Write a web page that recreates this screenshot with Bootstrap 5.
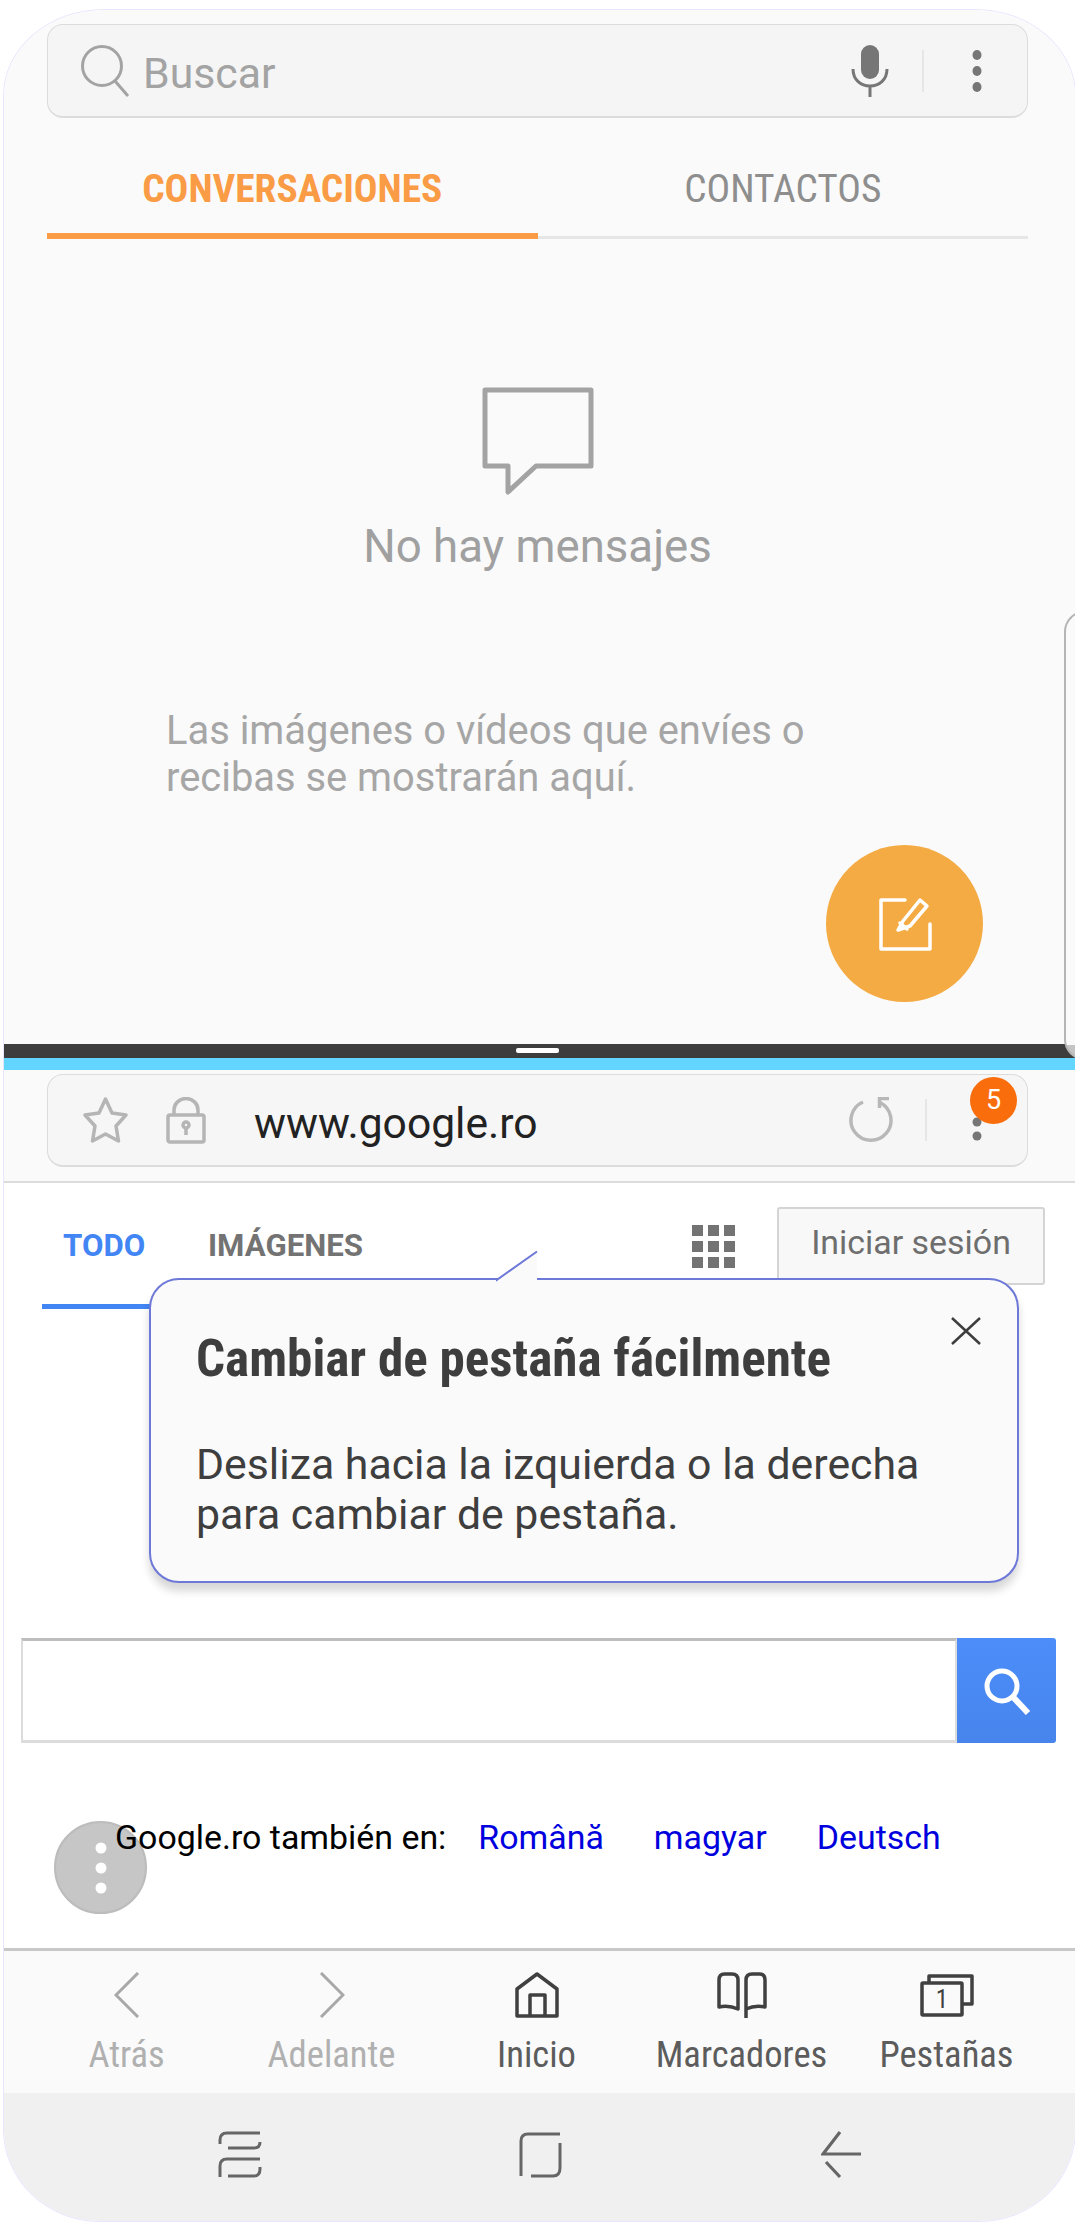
<!doctype html>
<html lang="es"><head><meta charset="utf-8"><title>Pantalla dividida</title>
<link href="https://cdn.jsdelivr.net/npm/bootstrap@5.3.0/dist/css/bootstrap.min.css" rel="stylesheet">
<style>
html,body{margin:0;background:#fff}
body{width:1075px;height:2227px;overflow:hidden;font-family:Roboto,"Liberation Sans",sans-serif}
.phone{position:relative;margin:10px 0 0 4px;width:1071px;height:2211px;overflow:hidden;border-radius:100px 100px 96px 96px/86px 86px 92px 92px;background:#fff;box-shadow:0 0 0 1px #e6e6ff}
.cond{font-family:"Roboto Condensed","Liberation Sans Narrow",Roboto,sans-serif;font-stretch:75%}
.pane-top{height:1034px;background:#fafafa;padding:14px 47px 0 43px;position:relative}
.addr{border:1px solid #dcdcdc;border-bottom-width:2px;border-radius:16px;background:#f5f5f5}
.addr-search{height:94px;padding:0 43px 0 33px}
.buscar{font-size:42.8px;line-height:50px;color:#a3a3a3;margin:4px 0 0 12px}
.vsep{width:2px;height:42px;background:#e6e6e6}
.tabs-msg{margin-top:49px}
.tab-m{width:50%;height:69px;font-size:39.4px;text-align:center;line-height:38px;border-bottom:3px solid #e6e6e6;color:#8e8e8e}
.tab-m.on{color:#fa9b45;font-weight:700;border-bottom:6px solid #fa9b45;height:72px;line-height:44px}
.empty{margin-top:148px;text-align:center;color:#a0a0a0}
.empty-t{font-size:45.6px;line-height:52px;margin-top:26px}
.empty-p{font-size:39.9px;line-height:47px;color:#a6a6a6;margin:134px 0 0 119px;text-align:left;width:680px}
.fab-w{position:absolute;left:822px;top:835px;width:157px;height:157px;border-radius:50%;background:#f4ab43}
.edge{position:absolute;z-index:2;right:-30px;top:601px;width:41px;height:449px;border:2px solid #b5b5b5;border-right:0;border-radius:22px;background:linear-gradient(#fafafa 432px,#c4c4c4 432px)}
.split{height:14px;background:#3d3d3d;position:relative}
.grip{position:absolute;left:512px;top:4px;width:43px;height:5px;border-radius:2px;background:#fff}
.stat{height:12px;background:#62d6fe}
.browser{height:113px;padding:4px 47px 0 43px;background:#fafafa;border-bottom:2px solid #dcdcdc}
.addr-url{height:93px;padding:0 43px 0 35px;background:#f6f6f6;position:relative}
.url{font-size:42.6px;line-height:50px;color:#222;margin:5px 0 0 48px}
.badge-n{position:absolute;left:922px;top:2px;width:47px;height:47px;border-radius:50%;background:#f96d0c;color:#fff;font-size:27px}
.web{height:765px;background:#fff;position:relative}
.gtabs{height:126px;padding:0 30px 0 38px}
.gtab{font-size:31.2px;font-weight:700;height:93px;margin-top:33px;line-height:60px;color:#737373;border-bottom:5px solid transparent;margin-left:37px;padding:0 21px}
.gtab.on{color:#4285f4;border-bottom-color:#4285f4;width:108px;padding:0 0 0 21px;margin-left:0}
.grid-ic{margin-top:42px}
.signin{width:268px;height:78px;margin:24px 0 0 41px;border:2px solid #d4d4d4;background:#f8f8f8;border-radius:3px;font-size:33.9px;line-height:40px;color:#6e6e6e;padding:0 0 6px 0}
.gsearch{margin:329px 19px 0 17px;height:105px;display:flex}
.ginput{flex:1;border:2px solid #dcdcdc;border-top-color:#bdbdbd;border-bottom-width:3px;border-top-width:3px;background:#fff}
.gbtn{width:99px;background:linear-gradient(#4c8dfa,#4785ec);border-radius:0 3px 3px 0}
.langs{position:relative;z-index:1;margin:76px 0 0 111px;font-size:33.9px;line-height:38px;color:#000}
.langs a{color:#0000de;text-decoration:none;margin-left:50px}
.langs a.first-l{margin-left:32px}
.gfab{position:absolute;left:50px;top:638px;width:93px;height:93px;border-radius:50%;background:#c6c6c6;border:2px solid #bcbcbc}
.pop{position:absolute;z-index:2;left:145px;top:95px;width:870px;height:305px;background:#fafafa;border:2px solid #6d78d8;border-radius:30px;box-shadow:0 8px 8px rgba(0,0,0,.16);padding:51px 40px 0 45px;color:#3e3e3e}
.tail{position:absolute;left:345px;top:-30px;width:45px;height:33px;display:block}
.pop-t{font-size:51.1px;font-weight:700;line-height:56px;margin:0}
.pop-b{font-size:42.8px;line-height:50px;margin:52px 0 0}
.pop-x{position:absolute;left:800px;top:37px;display:block}
.btoolbar{height:145px;border-top:3px solid #c8c8c8;background:#fafafa;padding:0 20px}
.bt{width:205px;text-align:center;color:#5c5c5c;font-size:36.6px;line-height:46px;padding-top:19px}
.bt.off{color:#b0b0b0}
.bt-ic{height:46px;margin-bottom:16px}
.navb{height:128px;background:#f0f0f0}
.nav-ic{margin-top:38px}
</style></head>
<body>
<div class="phone">
 <div class="pane-top">
  <div class="addr addr-search d-flex align-items-center">
   <svg width="50" height="52" viewBox="0 0 50 52" fill="none" stroke="#a3a3a3" stroke-width="3"><circle cx="21" cy="21" r="19.5"/><path d="M34 36 47 51"/></svg>
   <span class="buscar">Buscar</span>
   <svg class="ms-auto" width="38" height="52" viewBox="0 0 38 52" fill="none" stroke="#767676" stroke-width="3"><rect x="10" y="0" width="18" height="34" rx="9" fill="#767676" stroke="none"/><path d="M2 24c0 11 8 17 17 17s17-6 17-17M19 41v11"/></svg>
   <span class="vsep" style="margin:0 46px 0 33px"></span>
   <svg width="14" height="44" viewBox="0 0 14 44" fill="#767676"><ellipse cx="7" cy="6" rx="4.5" ry="5"/><ellipse cx="7" cy="22" rx="4.5" ry="5"/><ellipse cx="7" cy="38" rx="4.5" ry="5"/></svg>
  </div>
  <div class="tabs-msg d-flex align-items-end">
   <div class="tab-m on cond">CONVERSACIONES</div>
   <div class="tab-m cond">CONTACTOS</div>
  </div>
  <div class="empty">
   <svg width="112" height="108" viewBox="0 0 112 108" fill="none" stroke="#a3a3a3" stroke-width="5" stroke-linejoin="round"><path d="M3 3H109V79H54L26 105V79H3Z"/></svg>
   <div class="empty-t">No hay mensajes</div>
   <div class="empty-p">Las imágenes o vídeos que envíes o recibas se mostrarán aquí.</div>
  </div>
  <div class="fab-w d-flex align-items-center justify-content-center">
   <svg width="54" height="54" viewBox="0 0 54 54" fill="none" stroke="#fff" stroke-width="3.5" stroke-linejoin="round" stroke-linecap="round"><path d="M27 3H3V52H52V27"/><path d="M25 24 42 3 49 9 32 29 20 33Z"/><path d="M22 26 29 32"/></svg>
  </div>
  <div class="edge"></div>
 </div>
 <div class="split"><span class="grip"></span></div>
 <div class="stat"></div>
 <div class="browser">
  <div class="addr addr-url d-flex align-items-center">
   <svg width="45" height="46" viewBox="0 0 45 46" fill="none" stroke="#b5b5b5" stroke-width="3.5" stroke-linejoin="round"><path d="M22.5 2 29 16 43 18 33 29 35.5 44 22.5 37 9.5 44 12 29 2 18 16 16Z"/></svg>
   <svg style="margin-left:38px" width="40" height="47" viewBox="0 0 40 47" fill="none" stroke="#b5b5b5" stroke-width="3.5" stroke-linejoin="round"><rect x="2" y="18" width="36" height="27" rx="2"/><path d="M8 18V13a12 11.5 0 0 1 24 0v5M20 31v7"/><circle cx="20" cy="28" r="3"/></svg>
   <span class="url">www.google.ro</span>
   <svg class="ms-auto" style="margin-right:30px" width="46" height="46" viewBox="0 0 46 46" fill="none" stroke="#b8b8b8" stroke-width="3.5"><path d="M31 5.5A20 20 0 1 1 14 5"/><path d="M40 1.5H30.5V11"/></svg>
   <span class="vsep" style="margin-right:43px"></span>
   <svg style="margin-top:4px" width="14" height="44" viewBox="0 0 14 44" fill="#767676"><circle cx="7" cy="8" r="4.5"/><circle cx="7" cy="22" r="4.5"/><circle cx="7" cy="36" r="4.5"/></svg>
   <span class="badge-n d-flex align-items-center justify-content-center">5</span>
  </div>
 </div>
 <div class="web">
  <div class="gtabs d-flex align-items-start">
   <div class="gtab on">TODO</div>
   <div class="gtab">IMÁGENES</div>
   <svg class="grid-ic ms-auto" width="44" height="44" viewBox="0 0 44 44" fill="#737373"><path d="M0 0h11v11H0zM16 0h11v11H16zM32 0h11v11H32zM0 16h11v11H0zM16 16h11v11H16zM32 16h11v11H32zM0 32h11v11H0zM16 32h11v11H16zM32 32h11v11H32z"/></svg>
   <button class="signin btn" type="button">Iniciar sesión</button>
  </div>
  <div class="gsearch">
   <div class="ginput"></div>
   <div class="gbtn d-flex align-items-center justify-content-center">
    <svg width="48" height="48" viewBox="0 0 48 48" fill="none" stroke="#fff" stroke-width="5"><circle cx="19" cy="19" r="15"/><path d="M30 30 45 46" stroke-width="6"/></svg>
   </div>
  </div>
  <div class="langs d-flex">
   <span>Google.ro también en:</span>
   <a class="first-l" href="#">Română</a>
   <a href="#">magyar</a>
   <a href="#">Deutsch</a>
  </div>
  <div class="gfab d-flex align-items-center justify-content-center">
   <svg width="14" height="52" viewBox="0 0 14 52" fill="#fff"><circle cx="7" cy="6" r="5.5"/><circle cx="7" cy="26" r="5.5"/><circle cx="7" cy="46" r="5.5"/></svg>
  </div>
  <div class="pop">
   <svg class="tail" viewBox="0 0 45 33"><path d="M0 30 41 1V33H0Z" fill="#fafafa"/><path d="M-2 30.5H0L41 1.5" fill="none" stroke="#6d78d8" stroke-width="2"/></svg>
   <div class="pop-t cond">Cambiar de pestaña fácilmente</div>
   <div class="pop-b">Desliza hacia la izquierda o la derecha<br>para cambiar de pestaña.</div>
   <svg class="pop-x" width="30" height="28" viewBox="0 0 30 28" fill="none" stroke="#3e3e3e" stroke-width="2.5"><path d="M1 1 29 27M29 1 1 27"/></svg>
  </div>
 </div>
 <div class="btoolbar d-flex">
  <div class="bt off cond"><div class="bt-ic"><svg width="26" height="46" viewBox="0 0 26 46" fill="none" stroke="#a8a8a8" stroke-width="3"><path d="M24 1 2 23 24 45"/></svg></div>Atrás</div>
  <div class="bt off cond"><div class="bt-ic"><svg width="26" height="46" viewBox="0 0 26 46" fill="none" stroke="#a8a8a8" stroke-width="3"><path d="M2 1 24 23 2 45"/></svg></div>Adelante</div>
  <div class="bt cond"><div class="bt-ic"><svg width="44" height="46" viewBox="0 0 44 46" fill="none" stroke="#404040" stroke-width="3.5" stroke-linejoin="round"><path d="M2 44V17L22 2 42 17V44ZM15 44V23H30V44"/></svg></div>Inicio</div>
  <div class="bt cond"><div class="bt-ic"><svg width="50" height="46" viewBox="0 0 50 46" fill="none" stroke="#404040" stroke-width="3.5" stroke-linejoin="round"><path d="M21 37V8Q21 2 15 2H7.5Q2 2 2 8V35Q12 33 21 37Z"/><path d="M29 46V8Q29 2 35 2H42.5Q48 2 48 8V35Q38 33 29 37"/></svg></div>Marcadores</div>
  <div class="bt cond"><div class="bt-ic"><svg width="54" height="44" viewBox="0 0 54 44" fill="none" stroke="#404040" stroke-width="3.5" stroke-linejoin="round"><path d="M9 10V3H52V31H42"/><rect x="2" y="10" width="40" height="32" rx="1"/><text x="22" y="35" font-size="25" fill="#404040" stroke="none" text-anchor="middle" font-family="Roboto">1</text></svg></div>Pestañas</div>
 </div>
 <div class="navb d-flex">
  <svg class="nav-ic" style="margin-left:214px" width="44" height="48" viewBox="0 0 44 48" fill="none" stroke="#666" stroke-width="3"><path d="M42 2H9Q2 2 2 9V13M10 17H36Q42 17 42 11M2 46V35Q2 28 9 28H42M10 45H36Q42 45 42 38V36"/></svg>
  <svg class="nav-ic" style="margin-left:257px" width="44" height="48" viewBox="0 0 44 48" fill="none" stroke="#666" stroke-width="3"><path d="M41 3H9Q2 3 2 10V45M41 12V37Q41 45 34 45H12"/></svg>
  <svg class="nav-ic" style="margin-left:258px" width="42" height="48" viewBox="0 0 42 48" fill="none" stroke="#666" stroke-width="3.2"><path d="M19 1 2 23H40M5 31 19 46"/></svg>
 </div>
</div>
<script src="https://cdn.jsdelivr.net/npm/bootstrap@5.3.0/dist/js/bootstrap.bundle.min.js"></script>
</body></html>
